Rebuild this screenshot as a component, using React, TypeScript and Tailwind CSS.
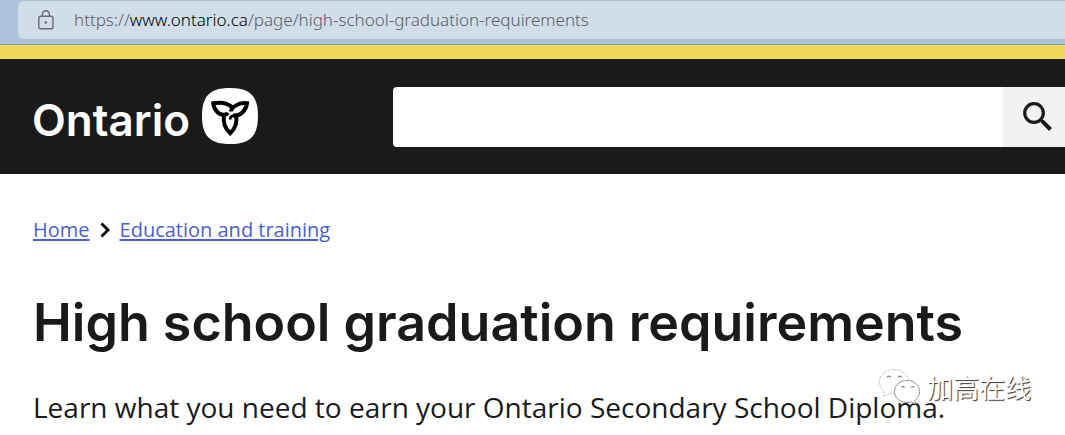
import React from "react";

function LockIcon() {
  return (
    <svg viewBox="0 0 16 20" className="h-5 w-4 shrink-0" fill="none" stroke="#686c72" strokeWidth="1.4" aria-hidden="true">
      <rect x="0.8" y="6.2" width="14.2" height="12.6" rx="1.8" />
      <path d="M4.4 6V4.2a3.5 3.5 0 0 1 7 0V6" />
      <circle cx="7.9" cy="12.5" r="1.2" fill="#686c72" stroke="none" />
    </svg>
  );
}

function Trillium() {
  return (
    <svg viewBox="0 0 56 56" className="mb-0.5 h-14 w-14 shrink-0" aria-hidden="true">
      <path d="M28 0C48 0 56 8 56 28S48 56 28 56 0 48 0 28 8 0 28 0Z" fill="#fff" />
      <g fill="none" stroke="#000" strokeWidth="4" strokeLinejoin="miter">
        <path d="M29 23.500C29 20 36 14 45 15.300C44 22.500 38.500 28.500 31 27.300" />
        <path d="M30 19C25 14.600 18 14 11.200 15.300C12.200 22.500 17 27 22 26.800C24 26.700 25.200 26 26 24.800" />
        <path d="M22 26.500C20.800 34 23 40.500 28.200 45.300C33.500 40.500 35.500 34 34 26.500" />
        <path d="M31.500 27.500C29 28 28 29.200 28.200 31.500" strokeWidth="2.600" />
      </g>
    </svg>
  );
}

function SearchIcon() {
  return (
    <svg viewBox="0 0 32 32" className="h-8 w-8" fill="none" stroke="#1a1a1a" aria-hidden="true">
      <circle cx="12" cy="12" r="9.300" strokeWidth="3.200" />
      <path d="M18.800 18.800l1.800 1.800" strokeWidth="3" />
      <path d="M20.200 20.200l8.300 8.300" strokeWidth="4" />
    </svg>
  );
}

function ChatBubbles() {
  return (
    <svg viewBox="0 0 44 38" className="h-[38px] w-11 shrink-0" fill="#fff" stroke="#777" strokeWidth="0.8" aria-hidden="true">
      <path d="M15 1.500C6.500 1.500.500 7 .500 14c0 4 2 7.200 5 9.500L4.500 28.500l6-3c1.600.5 3.300.7 5 .7 8 0 14.300-5.500 14.300-12.300S23 1.500 15 1.500Z" stroke="#aaa" strokeDasharray="1.500 1" />
      <path d="M28 12.500c-7 0-12.500 4.700-12.500 11S21 34.500 28 34.500c1.500 0 3-.2 4.200-.6l5 2.400-1.500-4c3-2 5-5.200 5-8.800 0-6.300-5.700-11-12.700-11Z" />
      <g fill="none" stroke="#555" strokeWidth="1">
        <path d="M8 9.500a2 2 0 0 1 3.800 0M19 9.500a2 2 0 0 1 3.800 0M22.500 19.500a1.800 1.800 0 0 1 3.200 0M32 19.500a1.800 1.800 0 0 1 3.200 0" />
      </g>
    </svg>
  );
}

export default function App() {
  return (
    <div className="relative min-h-screen overflow-hidden bg-white font-['Open_Sans','Noto_Sans',sans-serif] text-[#1a1a1a]">
      <div className="border-b border-[#8297b0] bg-[#adc3d9] pt-px pb-[5px] pl-[18px]">
        <div className="flex h-[38px] items-center gap-5 rounded-l-md bg-[#d1dde9] pl-5">
          <LockIcon />
          <p className="font-['Noto_Sans',sans-serif] text-[17px] leading-6 font-light whitespace-nowrap text-[#5a5e64]">
            https://<span className="text-black">www.ontario.ca</span>/page/high-school-graduation-requirements
          </p>
        </div>
      </div>

      <header className="border-t-[14px] border-[#f1d958] bg-[#1a1a1a]">
        <div className="flex items-center pt-7 pb-[27px] pl-8">
          <a href="#home" aria-label="Ontario home" className="flex h-[60px] w-[361px] shrink-0 items-center gap-3 text-white">
            <span className="pt-1.5 font-['Inter',sans-serif] text-[44px] leading-[56px] font-semibold">Ontario</span>
            <Trillium />
          </a>
          <form className="flex h-[60px] flex-1" onSubmit={(e) => e.preventDefault()}>
            <input type="search" aria-label="Search" className="min-w-0 flex-1 rounded-l bg-white px-4 text-xl text-black outline-none" />
            <button type="submit" aria-label="Submit search" className="flex w-[62px] items-center justify-center bg-[#f1f1f1] pl-2">
              <SearchIcon />
            </button>
          </form>
        </div>
      </header>

      <main className="px-[33px] pt-10">
        <nav aria-label="Breadcrumb" className="flex items-center text-xl leading-8 text-[#4a5fcb]">
          <a href="#home" className="underline decoration-2 underline-offset-2">Home</a>
          <svg viewBox="0 0 10 16" className="mx-[10px] h-4 w-[10px]" fill="none" stroke="#000" strokeWidth="2.800" aria-hidden="true">
            <path d="M1.500 1.500L8 8l-6.500 6.500" />
          </svg>
          <a href="#education" className="underline decoration-2 underline-offset-2">Education and training</a>
        </nav>
        <h1 className="mt-[45px] font-['Inter',sans-serif] text-[52px] leading-[64px] font-semibold whitespace-nowrap">
          High school graduation requirements
        </h1>
        <p className="mt-8 text-[28px] leading-10 whitespace-nowrap">
          Learn what you need to earn your Ontario Secondary School Diploma.
        </p>
      </main>

      <div className="absolute top-[367px] right-[34px] flex items-center gap-1">
        <ChatBubbles />
        <span className="font-['Noto_Sans_CJK_SC',sans-serif] text-[26px] leading-10 text-white [text-shadow:1px_1px_1px_#333]">加高在线</span>
      </div>
    </div>
  );
}
